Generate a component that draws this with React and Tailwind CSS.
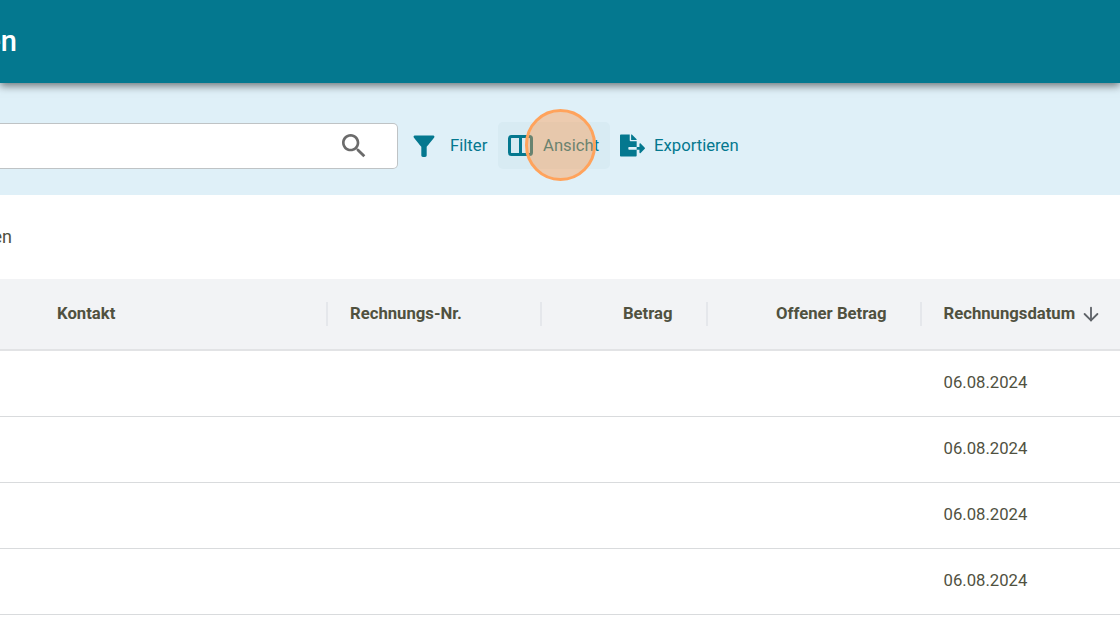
import React from "react";
import { FaFileExport } from "react-icons/fa";
import { ArrowDown } from "lucide-react";

const grid = "grid grid-cols-[35px_293px_214px_166px_214px_198px]";

function Sep() {
  return <span className="absolute right-0 top-[23px] h-[24px] w-[2px] bg-[#e5e7eb]" />;
}

function Row() {
  return (
    <div className={`${grid} h-[66px] border-b border-[#d9dbdd] items-center text-[16.7px] text-[#50513f]`}>
      <div />
      <div />
      <div />
      <div />
      <div />
      <div className="pl-[21.5px] pb-[2px]">06.08.2024</div>
    </div>
  );
}

export default function App() {
  return (
    <div className="relative w-[1120px] h-[625px] overflow-hidden bg-white font-['Roboto',sans-serif]">
      <header className="relative z-10 h-[83px] bg-[#04788f] flex items-center shadow-[0_3px_8px_rgba(0,0,0,0.5)]">
        <div className="w-[17px] overflow-hidden flex justify-end">
          <span className="whitespace-nowrap text-[29px] font-medium text-white">Rechnungen</span>
        </div>
      </header>

      <div className="h-[112px] pt-[13px] bg-[#dff0f8] flex items-center">
        <div className="w-[398px] h-[46px] bg-white border-[1.5px] border-[#bfc3c5] rounded-r-[5px] border-l-0 flex items-center justify-end pr-[27px]">
          <svg viewBox="0 0 24 24" className="w-[32px] h-[32px] fill-[#6b6b6b]">
            <path d="M15.5 14h-.79l-.28-.27C15.41 12.59 16 11.11 16 9.5 16 5.91 13.09 3 9.5 3S3 5.91 3 9.5 5.91 16 9.5 16c1.61 0 3.09-.59 4.23-1.57l.27.28v.79l5 4.99L20.49 19l-4.99-5zm-6 0C7.01 14 5 11.99 5 9.5S7.01 5 9.5 5 14 7.01 14 9.5 11.99 14 9.5 14z" />
          </svg>
        </div>

        <div className="ml-[13px] w-[87px] flex items-center text-[16.7px] text-[#04788f]">
          <svg viewBox="0 0 24 24" className="w-[28px] h-[28px] fill-[#04788f] shrink-0 -ml-[1px]">
            <path d="M3.25 4.61C5.27 7.2 9.7 12.6 9.7 12.6V20c0 .8.6 1.4 1.4 1.4h1.8c.8 0 1.4-.6 1.4-1.4v-7.4s4.43-5.4 6.45-7.99c.51-.66.04-1.61-.79-1.61H4.04c-.83 0-1.3.95-.79 1.61z" />
          </svg>
          <span className="ml-[12px]">Filter</span>
        </div>

        <div className="w-[112px] h-[47px] rounded-[5px] bg-[#d8ebf3] flex items-center text-[16.7px] text-[#04788f]">
          <svg viewBox="0 0 25 21" className="ml-[10px] w-[25px] h-[21px] shrink-0">
            <rect x="1.5" y="1.5" width="22" height="18" rx="2" fill="none" stroke="#04788f" strokeWidth="3" />
            <rect x="11" y="2" width="3" height="17" fill="#04788f" />
          </svg>
          <span className="ml-[10px]">Ansicht</span>
        </div>

        <div className="ml-[10px] flex items-center text-[16.7px] text-[#04788f]">
          <FaFileExport className="w-[25px] h-[25px] shrink-0" />
          <span className="ml-[9px]">Exportieren</span>
        </div>
      </div>

      <div className="h-[84px] flex items-center pb-[1px]">
        <div className="w-[12px] overflow-hidden flex justify-end">
          <span className="whitespace-nowrap text-[18px] text-[#50513f]">Rechnungen</span>
        </div>
      </div>

      <div className={`${grid} h-[72px] bg-[#f2f3f5] border-b-2 border-[#e2e3e5] items-center text-[16.7px] font-bold text-[#50513f]`}>
        <div className="relative h-full" />
        <div className="relative h-full flex items-center pl-[22px]">Kontakt<Sep /></div>
        <div className="relative h-full flex items-center pl-[22px]">Rechnungs-Nr.<Sep /></div>
        <div className="relative h-full flex items-center justify-end pr-[35.5px]">Betrag<Sep /></div>
        <div className="relative h-full flex items-center justify-end pr-[35.5px]">Offener Betrag<Sep /></div>
        <div className="relative h-full flex items-center pl-[21.5px] whitespace-nowrap">
          Rechnungsdatum
          <ArrowDown className="ml-[5px] w-[22px] h-[22px] text-[#5f6368]" strokeWidth={2} />
        </div>
      </div>

      <Row />
      <Row />
      <Row />
      <Row />

      <div className="absolute left-[525px] top-[109px] w-[71px] h-[72px] rounded-full border-[3px] border-[#ffa35c] bg-[#ff9440]/40 z-20" />
    </div>
  );
}
